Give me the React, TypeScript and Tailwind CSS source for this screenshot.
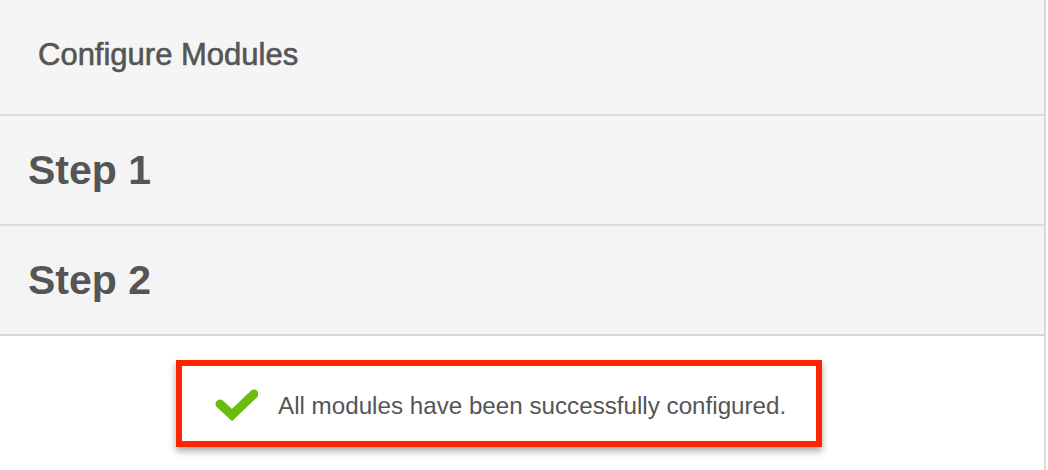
export default function App() {
  return (
    <div className="flex h-[470px] w-[1048px] bg-white font-['Liberation_Sans',Arial,sans-serif] text-[#555]">
      <div className="flex w-[1044px] flex-col">
        {/* Header */}
        <div className="flex h-[116px] items-center border-b-2 border-[#dcdcdc] bg-[#f5f5f5] pl-[38px] pb-[6px]">
          <h1 className="text-[31px] leading-none [-webkit-text-stroke:0.6px_#555]">Configure Modules</h1>
        </div>

        {/* Steps */}
        <div className="flex h-[110px] items-center border-b-2 border-[#dcdcdc] bg-[#f4f4f4] pl-[28px]">
          <h2 className="text-[41px] font-bold leading-none">Step 1</h2>
        </div>
        <div className="flex h-[110px] items-center border-b-2 border-[#d6d6d6] bg-[#f4f4f4] pl-[28px]">
          <h2 className="text-[41px] font-bold leading-none">Step 2</h2>
        </div>

        {/* Success message */}
        <div className="pl-[176px] pt-[24px]">
          <div className="flex h-[87px] w-[646px] items-center border-[6px] border-[#ff2500] bg-white pl-[32px] shadow-[0_4px_7px_rgba(0,0,0,0.35)]">
            <svg width="44" height="36" viewBox="0 0 44 36" className="mt-[2px]">
              <polyline
                points="6,17 18,28 40,7"
                fill="none"
                stroke="#6abd0a"
                strokeWidth="9"
                strokeLinecap="round"
                strokeLinejoin="miter"
              />
            </svg>
            <span className="ml-[20px] mt-[6px] text-[24.2px] leading-none">
              All modules have been successfully configured.
            </span>
          </div>
        </div>
      </div>
      <div className="w-[2px] bg-[#d9d9d9]" />
      <div className="w-[2px] bg-white" />
    </div>
  )
}
